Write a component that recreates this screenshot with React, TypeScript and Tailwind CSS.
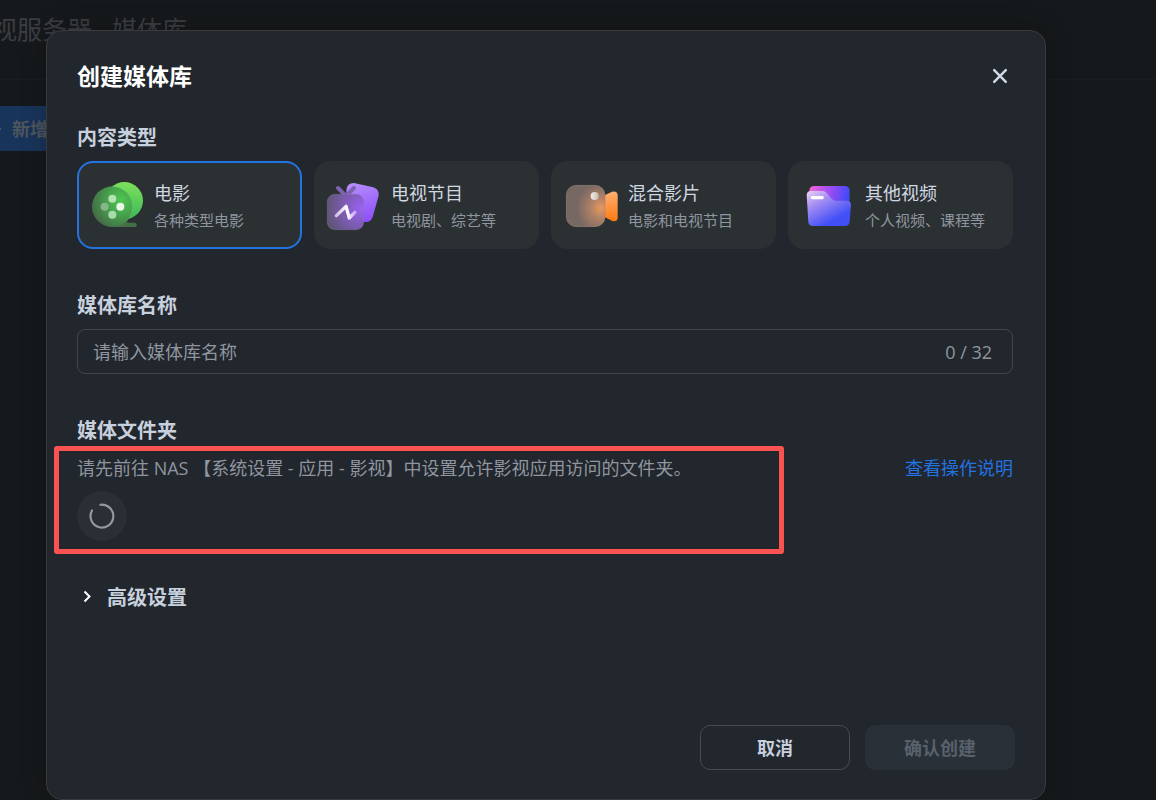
import { useState } from "react";
import type { ReactNode } from "react";

const MAX_NAME_LENGTH = 32;

function MovieIcon() {
  return (
    <svg viewBox="60 66 168 168" className="size-14 shrink-0" aria-hidden="true">
      <defs>
        <linearGradient id="movie-back" x1="0.6" y1="0" x2="0.5" y2="1">
          <stop offset="0" stopColor="#7ee05a" />
          <stop offset="1" stopColor="#38b858" />
        </linearGradient>
        <radialGradient id="movie-front" cx="0.72" cy="0.35" r="0.75">
          <stop offset="0" stopColor="#4fc552" />
          <stop offset="0.45" stopColor="#46a54c" />
          <stop offset="1" stopColor="#456b48" />
        </radialGradient>
        <linearGradient id="movie-base" x1="0" y1="0" x2="1" y2="0">
          <stop offset="0" stopColor="#467049" />
          <stop offset="1" stopColor="#436f46" />
        </linearGradient>
      </defs>
      <circle cx="163" cy="137" r="56" fill="url(#movie-back)" />
      <path d="M127 216L168 198Q172 203 178 203H195Q200 203 200 208V211Q200 216 195 216Z" fill="url(#movie-base)" />
      <circle cx="127" cy="155" r="61" fill="url(#movie-front)" />
      <path d="M127 94a61 61 0 0 1 42 105" fill="none" stroke="#7fd67c" strokeOpacity="0.55" strokeWidth="2" />
      <circle cx="127" cy="131" r="12" fill="#b4e4b6" />
      <circle cx="104" cy="155" r="12" fill="#86b688" />
      <circle cx="151" cy="155" r="12" fill="#e8f9e8" />
      <circle cx="127" cy="179" r="12" fill="#a9dcac" />
    </svg>
  );
}

function TvIcon() {
  return (
    <svg viewBox="51 66 168 168" className="size-14 shrink-0 overflow-visible" aria-hidden="true">
      <defs>
        <linearGradient id="tv-back" x1="0.3" y1="0" x2="0.6" y2="1">
          <stop offset="0" stopColor="#b58cfb" />
          <stop offset="1" stopColor="#8d50fa" />
        </linearGradient>
        <radialGradient id="tv-front" cx="0.95" cy="0.4" r="0.95">
          <stop offset="0" stopColor="#9b62f2" />
          <stop offset="0.5" stopColor="#7f5cb8" />
          <stop offset="1" stopColor="#61567a" />
        </radialGradient>
        <linearGradient id="tv-wave" x1="0" y1="0" x2="1" y2="0">
          <stop offset="0" stopColor="#cfc0e6" />
          <stop offset="0.6" stopColor="#ffffff" />
          <stop offset="1" stopColor="#c9a8fb" />
        </linearGradient>
      </defs>
      <path
        d="M130 84Q136 84 142 86L190 97Q208 103 206 122L188 186Q183 202 166 201L120 194Q104 190 105 172L110 100Q114 85 130 84Z"
        fill="url(#tv-back)"
      />
      <path d="M84 99L104 119M132 99L112 119" stroke="#7e62ad" strokeWidth="12" strokeLinecap="round" />
      <rect x="52" y="118" width="109" height="106" rx="22" fill="url(#tv-front)" stroke="#8c77b0" strokeOpacity="0.6" strokeWidth="2" />
      <path
        d="M79 182L108 154L118 189L135 172"
        fill="none"
        stroke="url(#tv-wave)"
        strokeWidth="10"
        strokeLinecap="round"
        strokeLinejoin="round"
      />
    </svg>
  );
}

function MixedIcon() {
  return (
    <svg viewBox="57 66 168 168" className="size-14 shrink-0" aria-hidden="true">
      <defs>
        <linearGradient id="mixed-lens" x1="0" y1="0" x2="0" y2="1">
          <stop offset="0" stopColor="#ffb070" />
          <stop offset="1" stopColor="#ff7a12" />
        </linearGradient>
        <radialGradient id="mixed-body" cx="0.88" cy="0.55" r="0.6">
          <stop offset="0" stopColor="#e7985f" />
          <stop offset="0.45" stopColor="#ad8067" />
          <stop offset="1" stopColor="#786863" />
        </radialGradient>
        <linearGradient id="mixed-light" x1="0" y1="0" x2="1" y2="0">
          <stop offset="0" stopColor="#f4eeeb" />
          <stop offset="1" stopColor="#c9b9b0" />
        </linearGradient>
      </defs>
      <path d="M174 123L201 110Q218 107 218 121V189Q216 202 202 198L174 184Z" fill="url(#mixed-lens)" />
      <rect x="63" y="90" width="118" height="126" rx="31" fill="url(#mixed-body)" />
      <rect x="64" y="91" width="116" height="124" rx="30" fill="none" stroke="#a08b80" strokeOpacity="0.4" strokeWidth="2" />
      <circle cx="149" cy="123" r="12" fill="url(#mixed-light)" />
    </svg>
  );
}

function FolderIcon() {
  return (
    <svg viewBox="63 66 168 168" className="size-14 shrink-0" aria-hidden="true">
      <defs>
        <linearGradient id="folder-back" x1="0" y1="0" x2="1" y2="0.2">
          <stop offset="0" stopColor="#f765dc" />
          <stop offset="0.5" stopColor="#a24df0" />
          <stop offset="1" stopColor="#3e49f7" />
        </linearGradient>
        <linearGradient id="folder-front" x1="0" y1="0" x2="0.6" y2="0.85">
          <stop offset="0" stopColor="#ecd3f2" />
          <stop offset="0.4" stopColor="#a58ef2" />
          <stop offset="1" stopColor="#414ff6" />
        </linearGradient>
      </defs>
      <path d="M104 93H194Q209 93 209 108L207 195H88V108Q88 93 104 93Z" fill="url(#folder-back)" />
      <path
        d="M93 108H128Q135 108 140 114L155 131Q160 137 168 137H200Q213 137 213 150L209 200Q207 213 195 213H99Q86 213 85 200L80 121Q80 108 93 108Z"
        fill="url(#folder-front)"
      />
      <rect x="93" y="123" width="38" height="10" rx="4" fill="#ffffff" />
    </svg>
  );
}

interface ContentType {
  id: string;
  title: string;
  description: string;
  icon: ReactNode;
}

const contentTypes: ContentType[] = [
  { id: "movie", title: "电影", description: "各种类型电影", icon: <MovieIcon /> },
  { id: "tv", title: "电视节目", description: "电视剧、综艺等", icon: <TvIcon /> },
  { id: "mixed", title: "混合影片", description: "电影和电视节目", icon: <MixedIcon /> },
  { id: "other", title: "其他视频", description: "个人视频、课程等", icon: <FolderIcon /> },
];

function LibraryPage() {
  return (
    <div className="min-h-screen overflow-hidden">
      <header className="flex h-20 items-start border-b border-[#1b1e21] pt-3">
        <h1 className="-ml-2 whitespace-nowrap font-['Noto_Sans_CJK_SC',sans-serif] text-[25px] leading-8 text-[#3b3e42]">
          视服务器 - 媒体库
        </h1>
      </header>
      <button
        type="button"
        className="-ml-6 mt-[26px] flex h-[45px] items-center gap-2 bg-[#19345a] pl-3 pr-6 text-lg font-bold text-[#4e555d]"
      >
        <svg viewBox="0 0 16 16" className="size-4" fill="none" stroke="currentColor" strokeWidth="2" aria-hidden="true">
          <path d="M8 3v10M3 8h10" />
        </svg>
        新增
      </button>
    </div>
  );
}

export default function App() {
  const [selected, setSelected] = useState("movie");
  const [name, setName] = useState("");
  const [advanced, setAdvanced] = useState(false);

  return (
    <div className="relative min-h-screen overflow-hidden bg-[#16191b] font-['Open_Sans','Noto_Sans_CJK_SC',sans-serif]">
      <LibraryPage />

      <div className="absolute inset-0 flex pl-[46px] pr-[110px] pt-[30px]">
        <div
          role="dialog"
          aria-labelledby="dialog-title"
          className="flex flex-1 flex-col rounded-[16px] border border-[#393b3f] bg-[#22262d] px-[30px] pb-[29px] pt-[30px] shadow-[0_0_24px_rgba(0,0,0,0.25)]"
        >
          <div className="flex items-center justify-between">
            <h2 id="dialog-title" className="text-[23px] font-bold leading-[30px] text-white">
              创建媒体库
            </h2>
            <button type="button" aria-label="关闭" className="flex size-[30px] items-center justify-center text-[#cfd8e3]">
              <svg viewBox="0 0 16 16" className="size-4" fill="none" stroke="currentColor" strokeWidth="2.5" strokeLinecap="round">
                <path d="M2.2 2.2l11.6 11.6M13.8 2.2L2.2 13.8" />
              </svg>
            </button>
          </div>

          <div className="mt-[34px] flex flex-1 flex-col gap-11 pr-0.5">
            <fieldset>
              <legend className="text-xl font-bold leading-[26px] text-[#c7d0dd]">内容类型</legend>
              <div className="mt-2.5 grid grid-cols-4 gap-3">
                {contentTypes.map((type) => (
                  <label
                    key={type.id}
                    className="flex h-[88px] cursor-pointer items-center gap-2 rounded-[16px] border-2 border-[#2b3033] bg-[#2b3033] pl-[11px] has-checked:border-[#2373e1]"
                  >
                    <input
                      type="radio"
                      name="content-type"
                      className="sr-only"
                      value={type.id}
                      checked={selected === type.id}
                      onChange={() => setSelected(type.id)}
                    />
                    {type.icon}
                    <span className="flex flex-col whitespace-nowrap pt-0.5">
                      <span className="text-lg leading-7 text-[#d0d8e2]">{type.title}</span>
                      <span className="text-[15px] leading-[26px] text-[#8f969f]">{type.description}</span>
                    </span>
                  </label>
                ))}
              </div>
            </fieldset>

            <div>
              <label htmlFor="library-name" className="block text-xl font-bold leading-[26px] text-[#c7d0dd]">
                媒体库名称
              </label>
              <div className="mt-2.5 flex h-[45px] items-center rounded-lg border border-[#42464c] pl-[15px] pr-5 text-lg text-[#8f969f]">
                <input
                  id="library-name"
                  type="text"
                  value={name}
                  maxLength={MAX_NAME_LENGTH}
                  onChange={(e) => setName(e.target.value)}
                  placeholder="请输入媒体库名称"
                  className="min-w-0 flex-1 bg-transparent text-[#d0d8e2] outline-none placeholder:text-[#8f969f]"
                />
                <span>
                  {name.length} / {MAX_NAME_LENGTH}
                </span>
              </div>
            </div>

            <section>
              <h3 className="text-xl font-bold leading-[26px] text-[#c7d0dd]">媒体文件夹</h3>
              <div className="relative mt-2.5">
                <div className="flex items-center justify-between text-lg leading-7">
                  <p className="text-[#8f969f]">请先前往 NAS 【系统设置 - 应用 - 影视】中设置允许影视应用访问的文件夹。</p>
                  <a href="#help" className="text-[#2373e1]">
                    查看操作说明
                  </a>
                </div>
                <div role="status" aria-label="加载中" className="mt-[9px] flex size-[50px] items-center justify-center rounded-full bg-[#2b2e35]">
                  <svg viewBox="0 0 26 26" className="size-[26px]" fill="none" stroke="#95989b" strokeWidth="2.2" strokeLinecap="round">
                    <path d="M11.5 1.8A11.4 11.4 0 1 1 3 7.5" />
                  </svg>
                </div>
                <div className="pointer-events-none absolute -bottom-[13px] -left-[23px] -top-2 right-[229px] rounded-[3px] border-5 border-[#fb5252]" />
              </div>
            </section>

            <button
              type="button"
              aria-expanded={advanced}
              onClick={() => setAdvanced(!advanced)}
              className="flex items-center gap-2.5 self-start text-xl font-bold leading-[26px] text-[#c7d0dd]"
            >
              <svg viewBox="0 0 20 20" className="size-5" fill="none" stroke="#ffffff" strokeWidth="2">
                <path d="M7.5 3.5l5 5-5 5" />
              </svg>
              高级设置
            </button>
          </div>

          <div className="flex justify-end gap-[15px] text-lg font-bold">
            <button type="button" className="h-[45px] w-[150px] rounded-[10px] border border-[#464a51] text-[#c7d0dd]">
              取消
            </button>
            <button type="button" disabled className="h-[45px] w-[150px] rounded-[10px] bg-[#2a3037] text-[#58616c]">
              确认创建
            </button>
          </div>
        </div>
      </div>
    </div>
  );
}
